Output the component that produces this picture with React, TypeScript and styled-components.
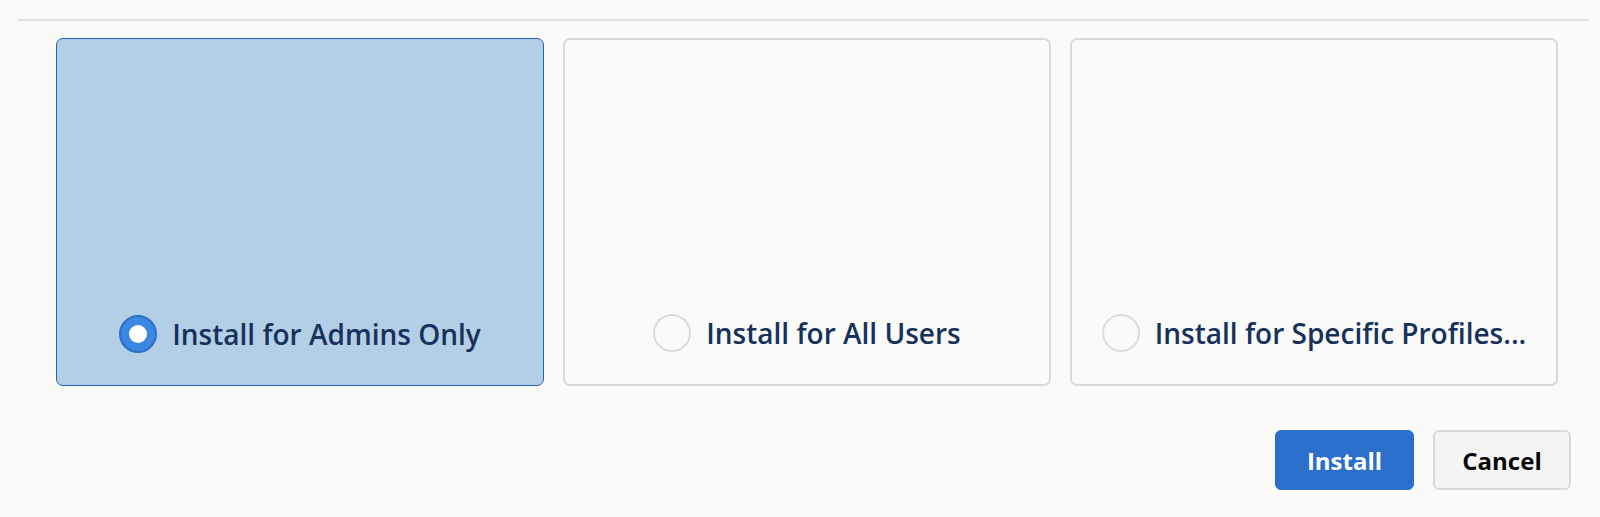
import styled, { createGlobalStyle } from 'styled-components'

const GlobalStyle = createGlobalStyle`
  html, body {
    margin: 0;
    padding: 0;
    background: #fafaf9;
  }
  body {
    font-family: "Open Sans", "Noto Sans", sans-serif;
  }
`

const options = [
  { id: 'admins', label: 'Install for Admins Only' },
  { id: 'all', label: 'Install for All Users' },
  { id: 'specific', label: 'Install for Specific Profiles...' },
]

export default function App() {
  const selected = 'admins'
  return (
    <Page>
      <GlobalStyle />
      <Divider />
      <Cards>
        {options.map((o) => (
          <Card key={o.id} $selected={o.id === selected}>
            <Choice>
              <Radio $selected={o.id === selected} />
              <Label>{o.label}</Label>
            </Choice>
          </Card>
        ))}
      </Cards>
      <Footer>
        <PrimaryButton>Install</PrimaryButton>
        <NeutralButton>Cancel</NeutralButton>
      </Footer>
    </Page>
  )
}

const Page = styled.div`
  width: 1600px;
  height: 517px;
  padding-top: 19px;
  box-sizing: border-box;
  background: #fafaf9;
`

const Divider = styled.div`
  height: 2px;
  margin: 0 11px 0 18px;
  background: #e2e1df;
`

const Cards = styled.div`
  display: flex;
  gap: 19px;
  padding: 17px 0 0 56px;
`

const Card = styled.div<{ $selected: boolean }>`
  width: 488px;
  height: 348px;
  box-sizing: border-box;
  border-radius: 7px;
  border: ${(p) => (p.$selected ? '1.5px solid #1f64a8' : '2px solid #d8d9dd')};
  background: ${(p) => (p.$selected ? '#b3cfe5' : '#fafaf9')};
  display: flex;
  align-items: flex-end;
  justify-content: center;
  padding-bottom: 32px;
`

const Choice = styled.label`
  display: flex;
  align-items: center;
  gap: 15px;
`

const Radio = styled.span<{ $selected: boolean }>`
  width: 38px;
  height: 38px;
  box-sizing: border-box;
  border-radius: 50%;
  flex-shrink: 0;
  border: 2px solid ${(p) => (p.$selected ? '#2c70c9' : '#dcdcdc')};
  background: ${(p) => (p.$selected ? '#3b88e2' : '#fafaf9')};
  display: flex;
  align-items: center;
  justify-content: center;

  &::after {
    content: '';
    display: ${(p) => (p.$selected ? 'block' : 'none')};
    width: 18px;
    height: 18px;
    border-radius: 50%;
    background: #ffffff;
  }
`

const Label = styled.span`
  font-size: 28px;
  font-weight: 600;
  color: #16325c;
  line-height: 1;
`

const Footer = styled.div`
  display: flex;
  justify-content: flex-end;
  gap: 19px;
  padding: 44px 29px 0 0;
`

const BaseButton = styled.button`
  height: 60px;
  width: 139px;
  border-radius: 6px;
  font-family: "Open Sans", "Noto Sans", sans-serif;
  font-size: 24px;
  font-weight: 700;
  cursor: pointer;
`

const PrimaryButton = styled(BaseButton)`
  background: #2b6fcc;
  border: 1.5px solid #2b6fcc;
  color: #ffffff;
`

const NeutralButton = styled(BaseButton)`
  width: 138px;
  background: #f4f4f5;
  border: 2px solid #d9d9dc;
  color: #080707;
`
